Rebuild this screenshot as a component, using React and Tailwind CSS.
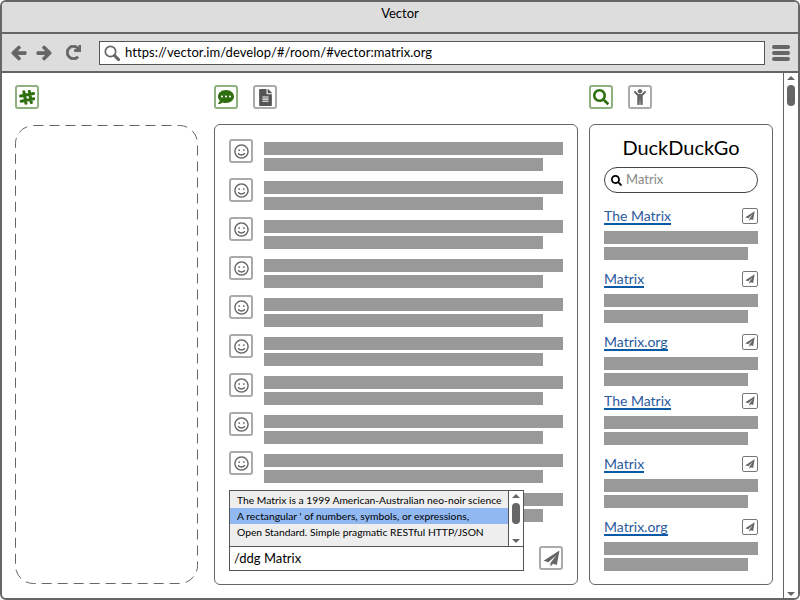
import { FaArrowLeft, FaArrowRight, FaRedo, FaSearch, FaCommentDots, FaFileAlt, FaChild, FaRegSmile } from 'react-icons/fa';

const font = 'font-["Lato","Noto_Sans",sans-serif]';

const results = [
  { title: 'The Matrix', mt: 'mt-0' },
  { title: 'Matrix', mt: 'mt-[11px]' },
  { title: 'Matrix.org', mt: 'mt-[11px]' },
  { title: 'The Matrix', mt: 'mt-[7px]' },
  { title: 'Matrix', mt: 'mt-[11px]' },
  { title: 'Matrix.org', mt: 'mt-[11px]' },
];

function PlaneIcon({ className }) {
  return (
    <svg viewBox="0 0 16 16" className={className} fill="currentColor">
      <path d="M15.5.5.5 10l4.6 1.6L12.5 5 7 12.3v3.2l2.4-2.5 3.6 1.2z" />
    </svg>
  );
}

function HashIcon({ className }) {
  return (
    <svg viewBox="0 0 16 15" className={className} fill="none" stroke="currentColor" strokeWidth="3" strokeLinecap="round">
      <path d="M4.9 1.8 6.9 13.2M10.3 1.2 12.3 12.6M1.6 6 14.6 3.6M2.2 11.2 15 8.8" />
    </svg>
  );
}

function UrlSearchIcon({ className }) {
  return (
    <svg viewBox="0 0 16 16" className={className} fill="none" stroke="currentColor">
      <circle cx="6.5" cy="6.5" r="5.2" strokeWidth="1.7" />
      <path d="M10.6 10.6 14.6 14.6" strokeWidth="3" strokeLinecap="round" />
    </svg>
  );
}

function ToolButton({ green, children }) {
  return (
    <div className={`flex h-6 w-6 items-center justify-center rounded-[3px] border-2 bg-white ${green ? 'border-[#8fb07f]' : 'border-[#aaaaaa]'}`}>
      {children}
    </div>
  );
}

function MessageRow() {
  return (
    <div className="flex h-[39px] shrink-0 gap-[11px]">
      <div className="flex h-6 w-6 shrink-0 items-center justify-center rounded-[3px] border-2 border-[#aaaaaa] bg-white">
        <FaRegSmile className="text-[15px] text-[#666666]" />
      </div>
      <div className="flex-1 pt-[3px]">
        <div className="h-[13px] bg-[#999999]" />
        <div className="mt-[3px] h-[13px] w-[279px] bg-[#999999]" />
      </div>
    </div>
  );
}

function Result({ title, mt }) {
  return (
    <div className={mt}>
      <div className="flex h-4 items-start justify-between">
        <a className="border-b-2 border-[#0b5aa5] pt-[1px] text-[14px] leading-[14px] text-[#2a5a9e]">{title}</a>
        <div className="flex h-4 w-4 items-center justify-center rounded-[2px] border border-[#777777] bg-white">
          <PlaneIcon className="h-[10px] w-[10px] text-[#666666]" />
        </div>
      </div>
      <div className="mt-[7px] h-[13px] bg-[#999999]" />
      <div className="mt-[3px] h-[13px] w-[144px] bg-[#999999]" />
    </div>
  );
}

export default function App() {
  return (
    <div className={`flex h-[600px] w-[800px] flex-col overflow-hidden rounded-[6px] border-2 border-[#666666] bg-white text-black ${font}`}>
      <div className="flex h-8 shrink-0 items-center justify-center border-b-2 border-[#666666] bg-[#dddddd] pb-[6px] text-[13px]">
        Vector
      </div>

      <div className="flex h-[39px] shrink-0 items-center border-b-2 border-[#666666] bg-[#dddddd]">
        <div className="flex w-[97px] items-center pl-[9px] text-[#666666]">
          <FaArrowLeft className="text-[16px]" stroke="currentColor" strokeWidth="40" />
          <FaArrowRight className="ml-[9px] text-[16px]" stroke="currentColor" strokeWidth="40" />
          <FaRedo className="ml-[14px] text-[15px]" stroke="currentColor" strokeWidth="30" />
        </div>
        <div className="mt-[1px] flex h-6 w-[666px] items-center border border-[#555555] bg-white pl-[4px] text-[13px] tracking-[0.06px]">
          <UrlSearchIcon className="h-4 w-4 text-[#666666]" />
          <span className="ml-[5px]">https://vector.im/develop/#/room/#vector:matrix.org</span>
        </div>
        <div className="ml-[7px] flex flex-col gap-[2px]">
          <div className="h-1 w-[18px] rounded-[2px] bg-[#666666]" />
          <div className="h-1 w-[18px] rounded-[2px] bg-[#666666]" />
          <div className="h-1 w-[18px] rounded-[2px] bg-[#666666]" />
        </div>
      </div>

      <div className="flex min-h-0 flex-1">
        <div className="flex flex-1 pl-[13px] pt-3">
          <div className="flex w-[183px] flex-col">
            <ToolButton green><HashIcon className="h-[15px] w-4 text-[#2f6f0f]" /></ToolButton>
            <svg className="mt-[16px] h-[459px] w-[183px]" fill="none" stroke="#666666" strokeDasharray="10 6">
              <rect x="0.5" y="0.5" width="182" height="458" rx="18" />
            </svg>
          </div>

          <div className="ml-4 flex w-[364px] flex-col">
            <div className="flex gap-[15px]">
              <ToolButton green><FaCommentDots className="text-[16px] text-[#2f6f0f]" /></ToolButton>
              <ToolButton><FaFileAlt className="text-[17px] text-[#555555]" /></ToolButton>
            </div>
            <div className="mt-[15px] flex h-[461px] flex-col rounded-[6px] border border-[#666666] px-[14px] pt-[14px]">
              <div className="h-[407px] overflow-hidden">
                {Array.from({ length: 10 }).map((_, i) => (
                  <MessageRow key={i} />
                ))}
              </div>
              <div className="relative flex items-start justify-between">
                <div className="h-[25px] w-[295px] border border-[#555555] bg-white pl-1 text-[13px] leading-[23px]">/ddg Matrix</div>
                <div className="flex h-6 w-6 items-center justify-center rounded-[3px] border-2 border-[#aaaaaa] bg-white">
                  <PlaneIcon className="h-[17px] w-[17px] text-[#666666]" />
                </div>
                <div className="absolute bottom-[24px] left-0 flex h-[57px] w-[295px] border border-[#555555] bg-[#eeeeee] text-[10.3px]">
                  <div className="flex-1 pt-[1px]">
                    <div className="h-4 pl-[7px] leading-4">The Matrix is a 1999 American-Australian neo-noir science</div>
                    <div className="h-4 bg-[#91b8f0] pl-[7px] leading-4">A rectangular ' of numbers, symbols, or expressions,</div>
                    <div className="h-4 pl-[7px] leading-4">Open Standard. Simple pragmatic RESTful HTTP/JSON</div>
                  </div>
                  <div className="relative w-[15px] border-l border-[#555555] bg-white">
                    <div className="mx-auto mt-[3px] h-0 w-0 border-x-[4px] border-b-[4px] border-x-transparent border-b-[#666666]" />
                    <div className="mx-auto mt-[5px] h-[21px] w-[8px] rounded-[4px] bg-[#666666]" />
                    <div className="absolute bottom-[3px] left-[3px] h-0 w-0 border-x-[4px] border-t-[4px] border-x-transparent border-t-[#666666]" />
                  </div>
                </div>
              </div>
            </div>
          </div>

          <div className="ml-[11px] flex w-[184px] flex-col">
            <div className="flex gap-[15px]">
              <ToolButton green><FaSearch className="text-[16px] text-[#2f6f0f]" /></ToolButton>
              <ToolButton><FaChild className="text-[16px] text-[#666666]" /></ToolButton>
            </div>
            <div className="mt-[15px] h-[461px] rounded-[6px] border border-[#666666] px-[14px] pt-[10px]">
              <div className="text-center text-[20px] leading-[24px]">DuckDuckGo</div>
              <div className="mt-[8px] flex h-[26px] items-center rounded-[13px] border border-[#444444] pl-[6px] text-[13px] text-[#888888]">
                <FaSearch className="text-[11px] text-black" />
                <span className="ml-[4px]">Matrix</span>
              </div>
              <div className="mt-[15px]">
                {results.map((r, i) => (
                  <Result key={i} title={r.title} mt={r.mt} />
                ))}
              </div>
            </div>
          </div>
        </div>

        <div className="relative w-[15px] shrink-0 border-l border-[#666666] bg-white">
          <div className="mx-auto mt-[3px] h-0 w-0 border-x-[4px] border-b-[4px] border-x-transparent border-b-[#666666]" />
          <div className="mx-auto mt-[5px] h-[21px] w-[8px] rounded-[4px] bg-[#666666]" />
          <div className="absolute bottom-[2px] left-[3px] h-0 w-0 border-x-[4px] border-t-[4px] border-x-transparent border-t-[#666666]" />
        </div>
      </div>
    </div>
  );
}
